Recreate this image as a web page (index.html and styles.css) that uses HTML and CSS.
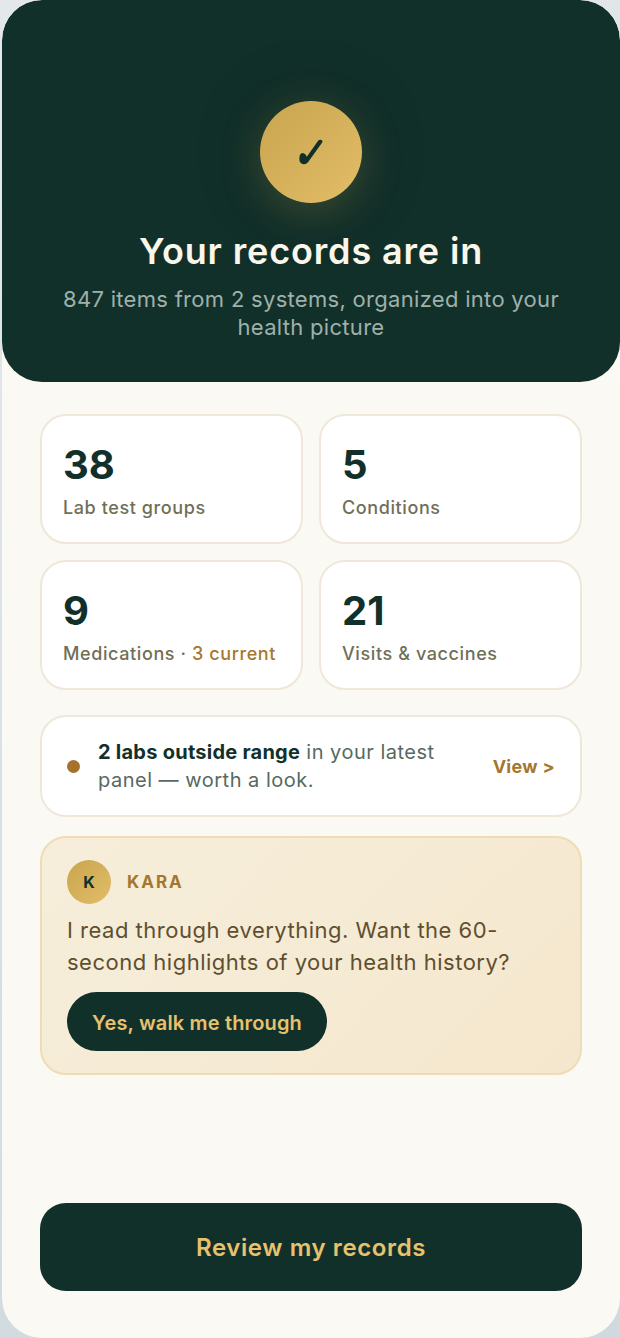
FILE: index.html
```html
<!DOCTYPE html>
<html lang="en">
<head>
  <meta charset="UTF-8">
  <meta name="viewport" content="width=device-width, initial-scale=1.0">
  <title>Your records are in</title>
  <link rel="stylesheet" href="styles.css">
</head>
<body>
  <div class="phone">
    <!-- Hero -->
    <div class="hero">
      <div class="check-circle">
        <svg class="check-icon" viewBox="0 0 24 25.5" width="24" height="26" aria-label="Done">
          <path d="M19.5 1Q21.5-.2 23 1 24 2 23 3.5L9 23Q7 25.3 4.5 25 1 24.5.4 21 0 18 1 15.5 2.2 13.5 4 13.8 6.8 14.3 7.8 17.5Z"/>
        </svg>
      </div>
      <h1 class="hero-title">Your records are in</h1>
      <p class="hero-sub">847 items from 2 systems, organized into your health picture</p>
    </div>

    <div class="content">
      <!-- Stats -->
      <div class="stats">
        <div class="stat-card">
          <div class="stat-number">38</div>
          <div class="stat-label">Lab test groups</div>
        </div>
        <div class="stat-card">
          <div class="stat-number">5</div>
          <div class="stat-label">Conditions</div>
        </div>
        <div class="stat-card">
          <div class="stat-number">9</div>
          <div class="stat-label">Medications · <span class="stat-accent">3 current</span></div>
        </div>
        <div class="stat-card">
          <div class="stat-number">21</div>
          <div class="stat-label">Visits &amp; vaccines</div>
        </div>
      </div>

      <!-- Alert -->
      <div class="alert">
        <span class="alert-dot"></span>
        <div class="alert-text"><strong>2 labs outside range</strong> in your latest panel — worth a look.</div>
        <div class="alert-link">View &gt;</div>
      </div>

      <!-- Kara -->
      <div class="kara">
        <div class="kara-head">
          <div class="kara-avatar">K</div>
          <div class="kara-name">KARA</div>
        </div>
        <p class="kara-text">I read through everything. Want the 60-second highlights of your health history?</p>
        <button class="kara-btn">Yes, walk me through</button>
      </div>

      <button class="review-btn">Review my records</button>
    </div>
  </div>
</body>
</html>
```
FILE: styles.css
```css
* {
  box-sizing: border-box;
}

body {
  margin: 0;
  height: 1338px;
  overflow: hidden;
  padding-left: 2px;
  font-family: Inter, "Liberation Sans", sans-serif;
  background: linear-gradient(160deg, #e4e8ea, #cfd9de);
}

.phone {
  width: 618px;
  height: 1338px;
  display: flex;
  flex-direction: column;
  background-color: #fbf9f3;
  border-radius: 40px;
  overflow: hidden;
}

.hero {
  height: 382px;
  padding-top: 101px;
  display: flex;
  flex-direction: column;
  align-items: center;
  background-color: #12302a;
  border-radius: 40px;
}

.check-circle {
  width: 102px;
  height: 102px;
  border-radius: 50%;
  display: flex;
  justify-content: center;
  align-items: center;
  background: linear-gradient(135deg, #c9a550, #e3bd68);
  box-shadow: 0 8px 40px rgba(201, 165, 80, 0.25), 0 0 72px rgba(10, 32, 27, 0.2);
}

.check-icon {
  fill: #12302a;
}

.hero-title {
  margin: 26px 0 0;
  font-size: 36px;
  line-height: 44px;
  font-weight: 600;
  letter-spacing: 0.85px;
  color: #fbf6ea;
}

.hero-sub {
  width: 520px;
  margin: 12px 0 0;
  font-size: 22px;
  line-height: 28px;
  font-weight: 400;
  letter-spacing: 0.3px;
  text-align: center;
  color: #9fb1aa;
}

.content {
  flex-grow: 1;
  display: flex;
  flex-direction: column;
  padding: 32px 38px 47px;
}

.stats {
  display: grid;
  grid-template-columns: 1fr 1fr;
  gap: 16px;
}

.stat-card {
  height: 130px;
  padding: 25px 21px 0;
  background-color: white;
  border: 2px solid #efe8d9;
  border-radius: 26px;
}

.stat-number {
  font-size: 40px;
  line-height: 48px;
  font-weight: 700;
  color: #12302a;
}

.stat-label {
  margin-top: 7px;
  font-size: 18px;
  line-height: 24px;
  font-weight: 500;
  letter-spacing: 0.6px;
  color: #6f6f58;
}

.stat-accent {
  color: #a5772e;
}

.alert {
  height: 102px;
  margin-top: 25px;
  padding: 0 25px;
  display: flex;
  align-items: center;
  background-color: white;
  border: 2px solid #efe8d9;
  border-radius: 26px;
}

.alert-dot {
  width: 13px;
  height: 13px;
  flex-shrink: 0;
  border-radius: 50%;
  background-color: #a5712b;
}

.alert-text {
  width: 370px;
  margin-left: 18px;
  font-size: 20px;
  line-height: 28px;
  letter-spacing: 0.5px;
  color: #566a62;
}

.alert-text strong {
  font-weight: 700;
  letter-spacing: 0.25px;
  color: #12302a;
}

.alert-link {
  margin-left: auto;
  font-size: 18px;
  font-weight: 700;
  letter-spacing: 0.3px;
  color: #a5772e;
}

.kara {
  height: 239px;
  margin-top: 19px;
  padding: 22px 25px 0;
  background: linear-gradient(135deg, #f6eedb, #f5e7cd);
  border: 2px solid #eedcb6;
  border-radius: 26px;
}

.kara-head {
  display: flex;
  align-items: center;
  gap: 16px;
}

.kara-avatar {
  width: 44px;
  height: 44px;
  border-radius: 50%;
  display: flex;
  justify-content: center;
  align-items: center;
  font-size: 16px;
  font-weight: 700;
  color: #12302a;
  background: linear-gradient(135deg, #c9a550, #e3bd68);
}

.kara-name {
  font-size: 17px;
  font-weight: 700;
  letter-spacing: 2px;
  color: #a5772e;
}

.kara-text {
  margin: 10px 0 0;
  font-size: 22px;
  line-height: 32px;
  letter-spacing: 0.5px;
  color: #5f4f30;
}

.kara-btn {
  display: block;
  width: 260px;
  height: 59px;
  margin-top: 14px;
  padding-top: 3px;
  border: none;
  border-radius: 30px;
  font-family: inherit;
  font-size: 20px;
  font-weight: 600;
  letter-spacing: 0.15px;
  color: #e8c16d;
  background-color: #12302a;
}

.review-btn {
  height: 88px;
  margin-top: auto;
  border: none;
  border-radius: 26px;
  font-family: inherit;
  font-size: 24px;
  font-weight: 600;
  letter-spacing: 0.6px;
  color: #e8c16d;
  background-color: #12302a;
}
```
